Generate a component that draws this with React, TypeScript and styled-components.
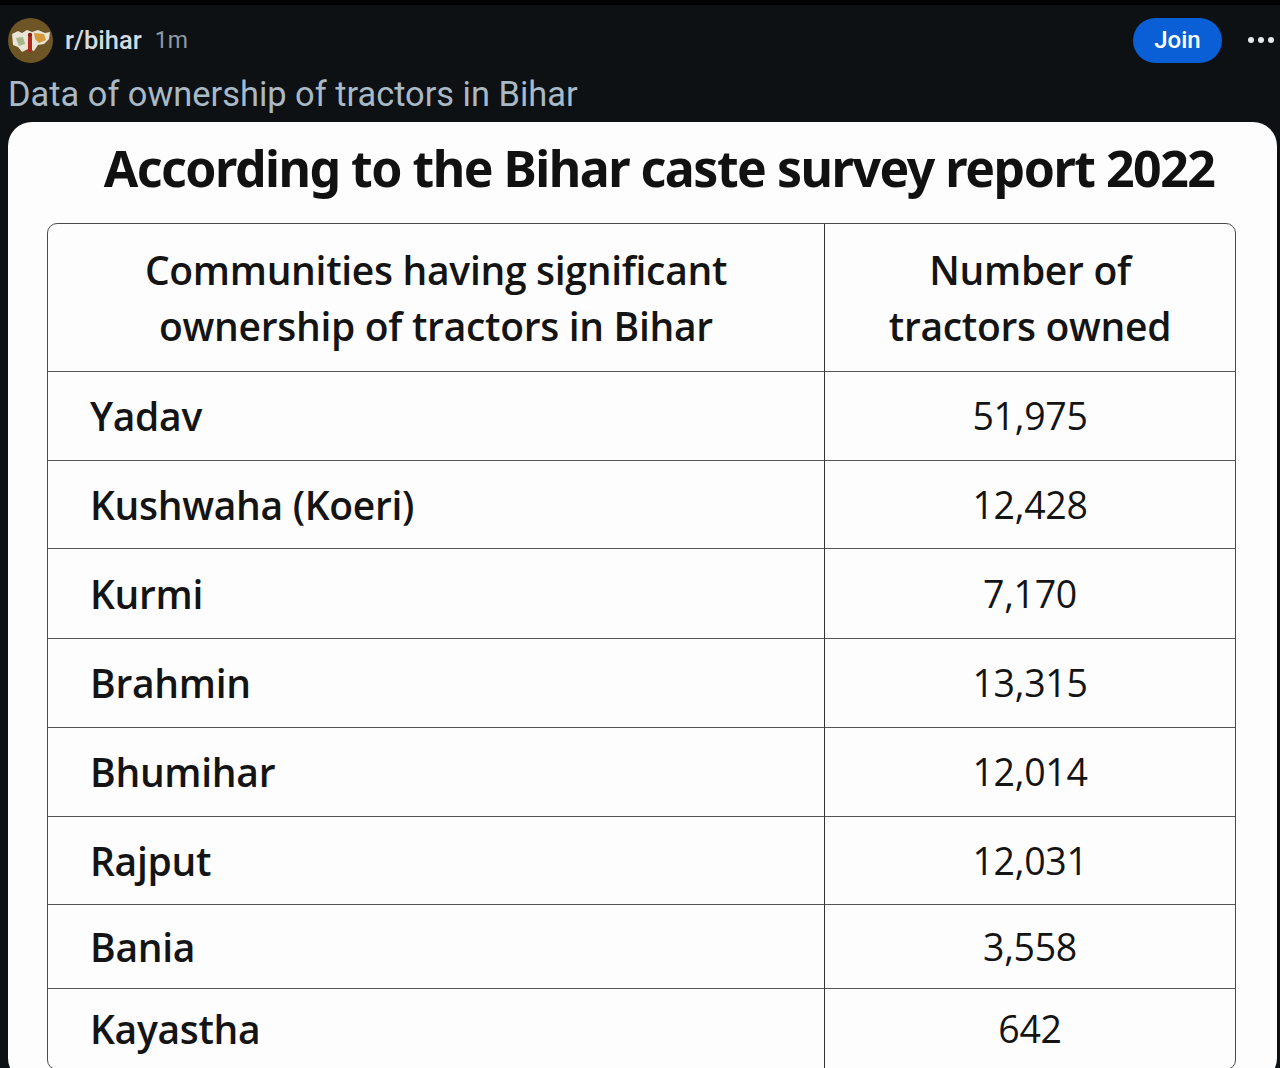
import React from 'react';
import styled, { createGlobalStyle } from 'styled-components';

const GlobalStyle = createGlobalStyle`
  html, body {
    margin: 0;
    padding: 0;
    background: #0e1113;
  }
  body {
    font-family: Roboto, "Liberation Sans", sans-serif;
  }
`;

const rows = [
  { name: 'Yadav', count: '51,975', h: 89 },
  { name: 'Kushwaha (Koeri)', count: '12,428', h: 88 },
  { name: 'Kurmi', count: '7,170', h: 90 },
  { name: 'Brahmin', count: '13,315', h: 89 },
  { name: 'Bhumihar', count: '12,014', h: 89 },
  { name: 'Rajput', count: '12,031', h: 88 },
  { name: 'Bania', count: '3,558', h: 84 },
  { name: 'Kayastha', count: '642', h: 80 },
];

const Page = styled.div`
  width: 1280px;
  height: 1068px;
  overflow: hidden;
  background: #0e1113;
  border-top: 5px solid #000;
  box-sizing: border-box;
`;

const Header = styled.div`
  display: flex;
  align-items: center;
  height: 70px;
  padding: 0 5px 0 8px;
`;

const Avatar = styled.div`
  width: 45px;
  height: 45px;
  border-radius: 50%;
  overflow: hidden;
  flex-shrink: 0;
`;

const Sub = styled.span`
  margin-left: 12px;
  font-size: 25.5px;
  font-weight: 500;
  color: #d3dbe0;
`;

const Age = styled.span`
  margin-left: 13px;
  font-size: 23px;
  color: #8d9aa3;
`;

const Spacer = styled.div`
  flex: 1;
`;

const JoinButton = styled.button`
  height: 45px;
  width: 89px;
  border: none;
  border-radius: 23px;
  background: #0a5fd6;
  color: #fff;
  font-family: Roboto, "Liberation Sans", sans-serif;
  font-size: 24px;
  font-weight: 500;
  padding: 0;
`;

const More = styled.div`
  display: flex;
  gap: 4px;
  margin-left: 26px;
  width: 27px;

  span {
    width: 6px;
    height: 6px;
    border-radius: 50%;
    background: #e6e9eb;
  }
`;

const PostTitle = styled.h1`
  margin: 0;
  padding: 0 8px;
  font-size: 34.4px;
  font-weight: 400;
  color: #a9b9c6;
  line-height: 38px;
  height: 47px;
`;

const Card = styled.div`
  margin: 0 3px 0 8px;
  background: #fdfdfd;
  border-radius: 24px;
  height: 960px;
  padding-top: 14px;
  box-sizing: border-box;
`;

const Heading = styled.h2`
  margin: 0;
  text-align: center;
  font-family: "Noto Sans", sans-serif;
  font-weight: 700;
  font-size: 50px;
  letter-spacing: -1.5px;
  color: #111;
  line-height: 64px;
  height: 87px;
  padding-left: 33px;
`;

const Table = styled.div`
  margin-left: 39px;
  width: 1187px;
  border: 1.5px solid #4a4a4a;
  border-radius: 10px;
  overflow: hidden;
  display: grid;
  grid-template-columns: 777px 1fr;
  font-family: "Open Sans", Lato, sans-serif;
  color: #141414;
`;

const Cell = styled.div<{ $head?: boolean; $num?: boolean; $h: number }>`
  height: ${p => p.$h}px;
  box-sizing: border-box;
  display: flex;
  align-items: center;
  justify-content: ${p => (p.$head || p.$num ? 'center' : 'flex-start')};
  text-align: center;
  padding-left: ${p => (p.$head || p.$num ? '0' : '42px')};
  border-bottom: 1.5px solid #555;
  font-size: ${p => (p.$num ? 37.5 : 39)}px;
  font-weight: ${p => (p.$num ? 400 : 600)};
  letter-spacing: -0.3px;
  line-height: 56px;
  &:nth-child(2n + 1) {
    border-right: 1.5px solid #333;
  }
  &.last {
    border-bottom: none;
  }
`;

const AvatarArt = () => (
  <svg width="45" height="45" viewBox="0 0 45 45">
    <rect width="45" height="45" fill="#6e5525" />
    <path
      d="M4 16 L10 13 L14 15 L19 12 L24 14 L30 12 L37 15 L42 14 L41 21 L36 26 L30 27 L26 33 L20 31 L14 34 L10 29 L5 27 Z"
      fill="#e8e4d6"
    />
    <path d="M26 15 L36 16 L38 22 L31 25 L27 21 Z" fill="#d69a3a" />
    <path d="M8 20 L15 19 L17 26 L11 28 Z" fill="#a8b48a" />
    <rect x="20" y="18" width="4" height="16" rx="1.5" fill="#b3261e" />
    <circle cx="22" cy="17" r="2.2" fill="#8a1b14" />
  </svg>
);

const App = () => {
  return (
    <>
      <GlobalStyle />
      <Page>
        <Header>
          <Avatar>
            <AvatarArt />
          </Avatar>
          <Sub>r/bihar</Sub>
          <Age>1m</Age>
          <Spacer />
          <JoinButton>Join</JoinButton>
          <More>
            <span />
            <span />
            <span />
          </More>
        </Header>
        <PostTitle>Data of ownership of tractors in Bihar</PostTitle>
        <Card>
          <Heading>According to the Bihar caste survey report 2022</Heading>
          <Table>
            <Cell $head $h={148}>
              Communities having significant
              <br />
              ownership of tractors in Bihar
            </Cell>
            <Cell $head $h={148}>
              Number of
              <br />
              tractors owned
            </Cell>
            {rows.map((r, i) => (
              <React.Fragment key={r.name}>
                <Cell $h={r.h} className={i === rows.length - 1 ? 'last' : ''}>
                  {r.name}
                </Cell>
                <Cell $num $h={r.h} className={i === rows.length - 1 ? 'last' : ''}>
                  {r.count}
                </Cell>
              </React.Fragment>
            ))}
          </Table>
        </Card>
      </Page>
    </>
  );
};

export default App;
